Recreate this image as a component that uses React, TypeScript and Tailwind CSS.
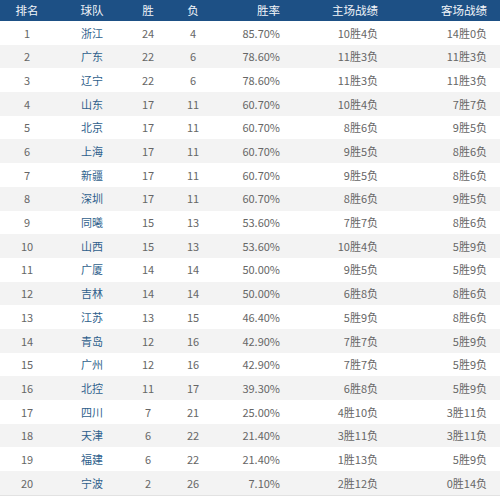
import React from "react";

const rows: [number, string, number, number, string, string, string][] = [
  [1, "浙江", 24, 4, "85.70%", "10胜4负", "14胜0负"],
  [2, "广东", 22, 6, "78.60%", "11胜3负", "11胜3负"],
  [3, "辽宁", 22, 6, "78.60%", "11胜3负", "11胜3负"],
  [4, "山东", 17, 11, "60.70%", "10胜4负", "7胜7负"],
  [5, "北京", 17, 11, "60.70%", "8胜6负", "9胜5负"],
  [6, "上海", 17, 11, "60.70%", "9胜5负", "8胜6负"],
  [7, "新疆", 17, 11, "60.70%", "9胜5负", "8胜6负"],
  [8, "深圳", 17, 11, "60.70%", "8胜6负", "9胜5负"],
  [9, "同曦", 15, 13, "53.60%", "7胜7负", "8胜6负"],
  [10, "山西", 15, 13, "53.60%", "10胜4负", "5胜9负"],
  [11, "广厦", 14, 14, "50.00%", "9胜5负", "5胜9负"],
  [12, "吉林", 14, 14, "50.00%", "6胜8负", "8胜6负"],
  [13, "江苏", 13, 15, "46.40%", "5胜9负", "8胜6负"],
  [14, "青岛", 12, 16, "42.90%", "7胜7负", "5胜9负"],
  [15, "广州", 12, 16, "42.90%", "7胜7负", "5胜9负"],
  [16, "北控", 11, 17, "39.30%", "6胜8负", "5胜9负"],
  [17, "四川", 7, 21, "25.00%", "4胜10负", "3胜11负"],
  [18, "天津", 6, 22, "21.40%", "3胜11负", "3胜11负"],
  [19, "福建", 6, 22, "21.40%", "1胜13负", "5胜9负"],
  [20, "宁波", 2, 26, "7.10%", "2胜12负", "0胜14负"],
];

const grid = "grid grid-cols-[54px_76px_36px_54px_60px_98px_109px_13px] items-center";

export default function App() {
  return (
    <div
      className="w-[500px] h-[498px] bg-white overflow-hidden"
      style={{ fontFamily: '"Noto Sans CJK SC", "Noto Sans", sans-serif' }}
    >
      <div className={`${grid} h-[21px] bg-[#1d5085] text-[#f2f5f9] text-[11.5px]`}>
        <div className="text-center">排名</div>
        <div className="text-center">球队</div>
        <div className="text-center">胜</div>
        <div className="text-center">负</div>
        <div className="text-right">胜率</div>
        <div className="text-right">主场战绩</div>
        <div className="text-right">客场战绩</div>
        <div />
      </div>
      {rows.map((r, i) => (
        <div
          key={r[0]}
          className={`${grid} h-[23.7px] text-[11px] text-[#666] ${i % 2 === 1 ? "bg-[#f3f3f3]" : "bg-white"}`}
        >
          <div className="text-center">{r[0]}</div>
          <div className="text-center text-[#2f5f8c]">{r[1]}</div>
          <div className="text-center">{r[2]}</div>
          <div className="text-center">{r[3]}</div>
          <div className="text-right">{r[4]}</div>
          <div className="text-right">{r[5]}</div>
          <div className="text-right">{r[6]}</div>
          <div />
        </div>
      ))}
      <div className="h-px bg-[#e2e2e2]" />
    </div>
  );
}
